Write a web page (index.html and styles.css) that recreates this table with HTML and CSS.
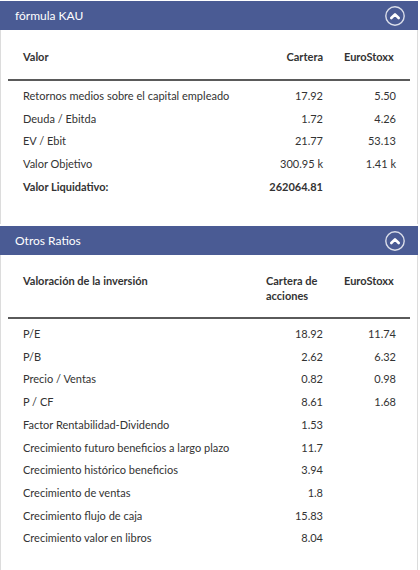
FILE: index.html
```html
<!DOCTYPE html>
<html lang="es">
<head>
<meta charset="utf-8">
<link rel="stylesheet" href="styles.css">
</head>
<body>
<div class="page">
  <section class="panel panel-first">
    <div class="panel-head">
      <span class="panel-title">fórmula KAU</span>
      <span class="toggle">
        <svg width="20" height="20" viewBox="0 0 20 20"><circle cx="10" cy="10" r="9.2" fill="none" stroke="rgba(255,255,255,0.8)" stroke-width="1.4"/><path d="M6.3 12 L10 8.3 L13.7 12" fill="none" stroke="#fff" stroke-width="2.6" stroke-linecap="round" stroke-linejoin="round"/></svg>
      </span>
    </div>
    <div class="panel-body">
      <div class="table">
        <div class="row thead">
          <div class="c1">Valor</div>
          <div class="c2 right">Cartera</div>
          <div class="c3">EuroStoxx</div>
        </div>
        <div class="tbody">
          <div class="row"><div class="c1">Retornos medios sobre el capital empleado</div><div class="c2 right">17.92</div><div class="c3 right">5.50</div></div>
          <div class="row"><div class="c1">Deuda / Ebitda</div><div class="c2 right">1.72</div><div class="c3 right">4.26</div></div>
          <div class="row"><div class="c1">EV / Ebit</div><div class="c2 right">21.77</div><div class="c3 right">53.13</div></div>
          <div class="row"><div class="c1">Valor Objetivo</div><div class="c2 right">300.95 k</div><div class="c3 right">1.41 k</div></div>
          <div class="row bold"><div class="c1">Valor Liquidativo:</div><div class="c2 right">262064.81</div><div class="c3 right"></div></div>
        </div>
      </div>
    </div>
  </section>
  <section class="panel panel-second">
    <div class="panel-head">
      <span class="panel-title">Otros Ratios</span>
      <span class="toggle">
        <svg width="20" height="20" viewBox="0 0 20 20"><circle cx="10" cy="10" r="9.2" fill="none" stroke="rgba(255,255,255,0.8)" stroke-width="1.4"/><path d="M6.3 12 L10 8.3 L13.7 12" fill="none" stroke="#fff" stroke-width="2.6" stroke-linecap="round" stroke-linejoin="round"/></svg>
      </span>
    </div>
    <div class="panel-body">
      <div class="table">
        <div class="row thead thead-2">
          <div class="c1">Valoración de la inversión</div>
          <div class="c2">Cartera de acciones</div>
          <div class="c3">EuroStoxx</div>
        </div>
        <div class="tbody">
          <div class="row"><div class="c1">P/E</div><div class="c2 right">18.92</div><div class="c3 right">11.74</div></div>
          <div class="row"><div class="c1">P/B</div><div class="c2 right">2.62</div><div class="c3 right">6.32</div></div>
          <div class="row"><div class="c1">Precio / Ventas</div><div class="c2 right">0.82</div><div class="c3 right">0.98</div></div>
          <div class="row"><div class="c1">P / CF</div><div class="c2 right">8.61</div><div class="c3 right">1.68</div></div>
          <div class="row"><div class="c1">Factor Rentabilidad-Dividendo</div><div class="c2 right">1.53</div><div class="c3 right"></div></div>
          <div class="row"><div class="c1">Crecimiento futuro beneficios a largo plazo</div><div class="c2 right">11.7</div><div class="c3 right"></div></div>
          <div class="row"><div class="c1">Crecimiento histórico beneficios</div><div class="c2 right">3.94</div><div class="c3 right"></div></div>
          <div class="row"><div class="c1">Crecimiento de ventas</div><div class="c2 right">1.8</div><div class="c3 right"></div></div>
          <div class="row"><div class="c1">Crecimiento flujo de caja</div><div class="c2 right">15.83</div><div class="c3 right"></div></div>
          <div class="row"><div class="c1">Crecimiento valor en libros</div><div class="c2 right">8.04</div><div class="c3 right"></div></div>
        </div>
      </div>
    </div>
  </section>
</div>
</body>
</html>
```

FILE: styles.css
```css
html, body {
  margin: 0;
  padding: 0;
  background: #fff;
}
body {
  font-family: Lato, "Liberation Sans", sans-serif;
  font-size: 11px;
  color: #333;
}
.page {
  width: 418px;
  padding-top: 1px;
}
.panel {
  border-left: 1px solid #dcdcdc;
  border-right: 1px solid #dcdcdc;
}
.panel-first {
  margin-bottom: 2px;
}
.panel-head {
  height: 29px;
  background: #4a5b94;
  color: #fff;
  display: flex;
  align-items: center;
  justify-content: space-between;
  padding: 0 13px 0 15px;
  margin: 0 -1px;
}
.panel-title {
  font-size: 12px;
  line-height: 16px;
}
.toggle {
  display: flex;
  width: 20px;
  height: 20px;
}
.panel-body {
  padding: 0 7px;
}
.panel-first .panel-body {
  height: 194px;
}
.panel-second .panel-body {
  height: 320px;
}
.row {
  display: grid;
  grid-template-columns: 1fr 57px 52px;
  column-gap: 21px;
  padding: 0 14px 0 15px;
  line-height: 22.7px;
}
.thead {
  font-weight: bold;
  line-height: 15px;
  padding-top: 19px;
  padding-bottom: 15px;
  border-bottom: 2px solid #5a5a5a;
  align-items: end;
}
.thead-2 {
  padding-top: 18px;
  padding-bottom: 14px;
  align-items: start;
}
.tbody {
  padding-top: 4px;
}
.right {
  text-align: right;
}
.bold {
  font-weight: bold;
}
```
